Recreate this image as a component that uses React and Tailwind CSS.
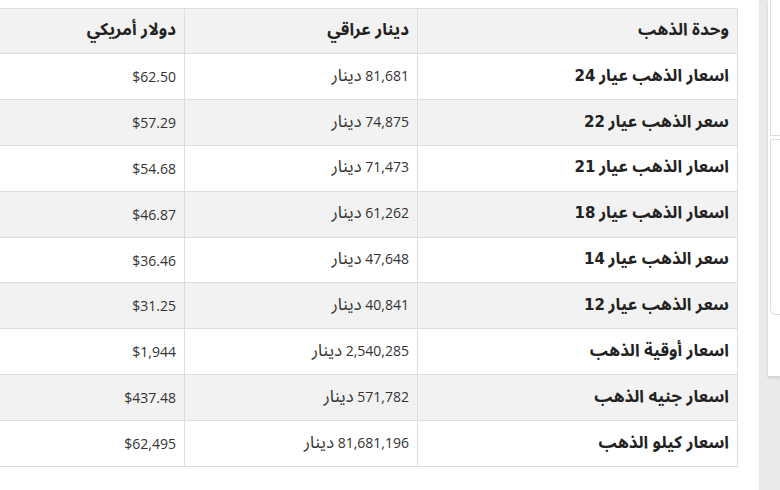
import React from "react";

const rows = [
  ["اسعار الذهب عيار", "24", "81,681", "$62.50"],
  ["سعر الذهب عيار", "22", "74,875", "$57.29"],
  ["اسعار الذهب عيار", "21", "71,473", "$54.68"],
  ["اسعار الذهب عيار", "18", "61,262", "$46.87"],
  ["سعر الذهب عيار", "14", "47,648", "$36.46"],
  ["سعر الذهب عيار", "12", "40,841", "$31.25"],
  ["اسعار أوقية الذهب", "", "2,540,285", "$1,944"],
  ["اسعار جنيه الذهب", "", "571,782", "$437.48"],
  ["اسعار كيلو الذهب", "", "81,681,196", "$62,495"],
];

const body = { fontFamily: '"Open Sans", "Noto Sans Arabic", sans-serif' };
const arabic = { fontFamily: '"Noto Sans Arabic", "DejaVu Sans", sans-serif' };
const digits = { fontFamily: '"DejaVu Sans", sans-serif' };

const thCls = "border border-[#dddddd] px-[8px] text-right text-[17px] font-bold text-[#222]";

export default function App() {
  return (
    <div className="flex h-[490px] w-[780px] overflow-hidden bg-white" style={body}>
      <div className="w-[759px] shrink-0 overflow-hidden pt-[8px]">
        <table dir="rtl" className="ml-[-22px] w-[760px] border-collapse text-[14px] text-[#333]">
          <thead>
            <tr className="h-[45px] bg-[#f2f2f2]">
              <th style={arabic} className={"w-[320px] " + thCls}>وحدة الذهب</th>
              <th style={arabic} className={"w-[233px] " + thCls}>دينار عراقي</th>
              <th style={arabic} className={thCls}>دولار أمريكي</th>
            </tr>
          </thead>
          <tbody>
            {rows.map((r, i) => (
              <tr key={i} className={i % 2 === 1 ? "h-[45.9px] bg-[#f2f2f2]" : "h-[45.9px] bg-white"}>
                <td className="border border-[#dddddd] px-[8px] text-right font-bold text-[#222]">
                  <span style={arabic} className="text-[17px]">{r[0]}</span>
                  {r[1] && (
                    <>
                      {" "}
                      <span style={digits} className="text-[15px]">{r[1]}</span>
                    </>
                  )}
                </td>
                <td className="border border-[#dddddd] px-[8px] text-right">
                  <span>{r[2]}</span> <span style={arabic} className="text-[17px]">دينار</span>
                </td>
                <td className="border border-[#dddddd] px-[8px] text-right">{r[3]}</td>
              </tr>
            ))}
          </tbody>
        </table>
      </div>
      <div className="flex w-[21px] shrink-0 flex-col bg-[#ebe9ea] pl-[9px]">
        <div className="flex h-[376px] flex-col bg-white pl-[2px] shadow-[0_2px_3px_rgba(0,0,0,0.12)]">
          <div className="h-[136px] border-b border-l border-[#dcdcdc]" />
          <div className="mt-[3px] h-[176px] rounded-bl-[6px] border-b border-l border-t border-[#dcdcdc]" />
        </div>
      </div>
    </div>
  );
}
